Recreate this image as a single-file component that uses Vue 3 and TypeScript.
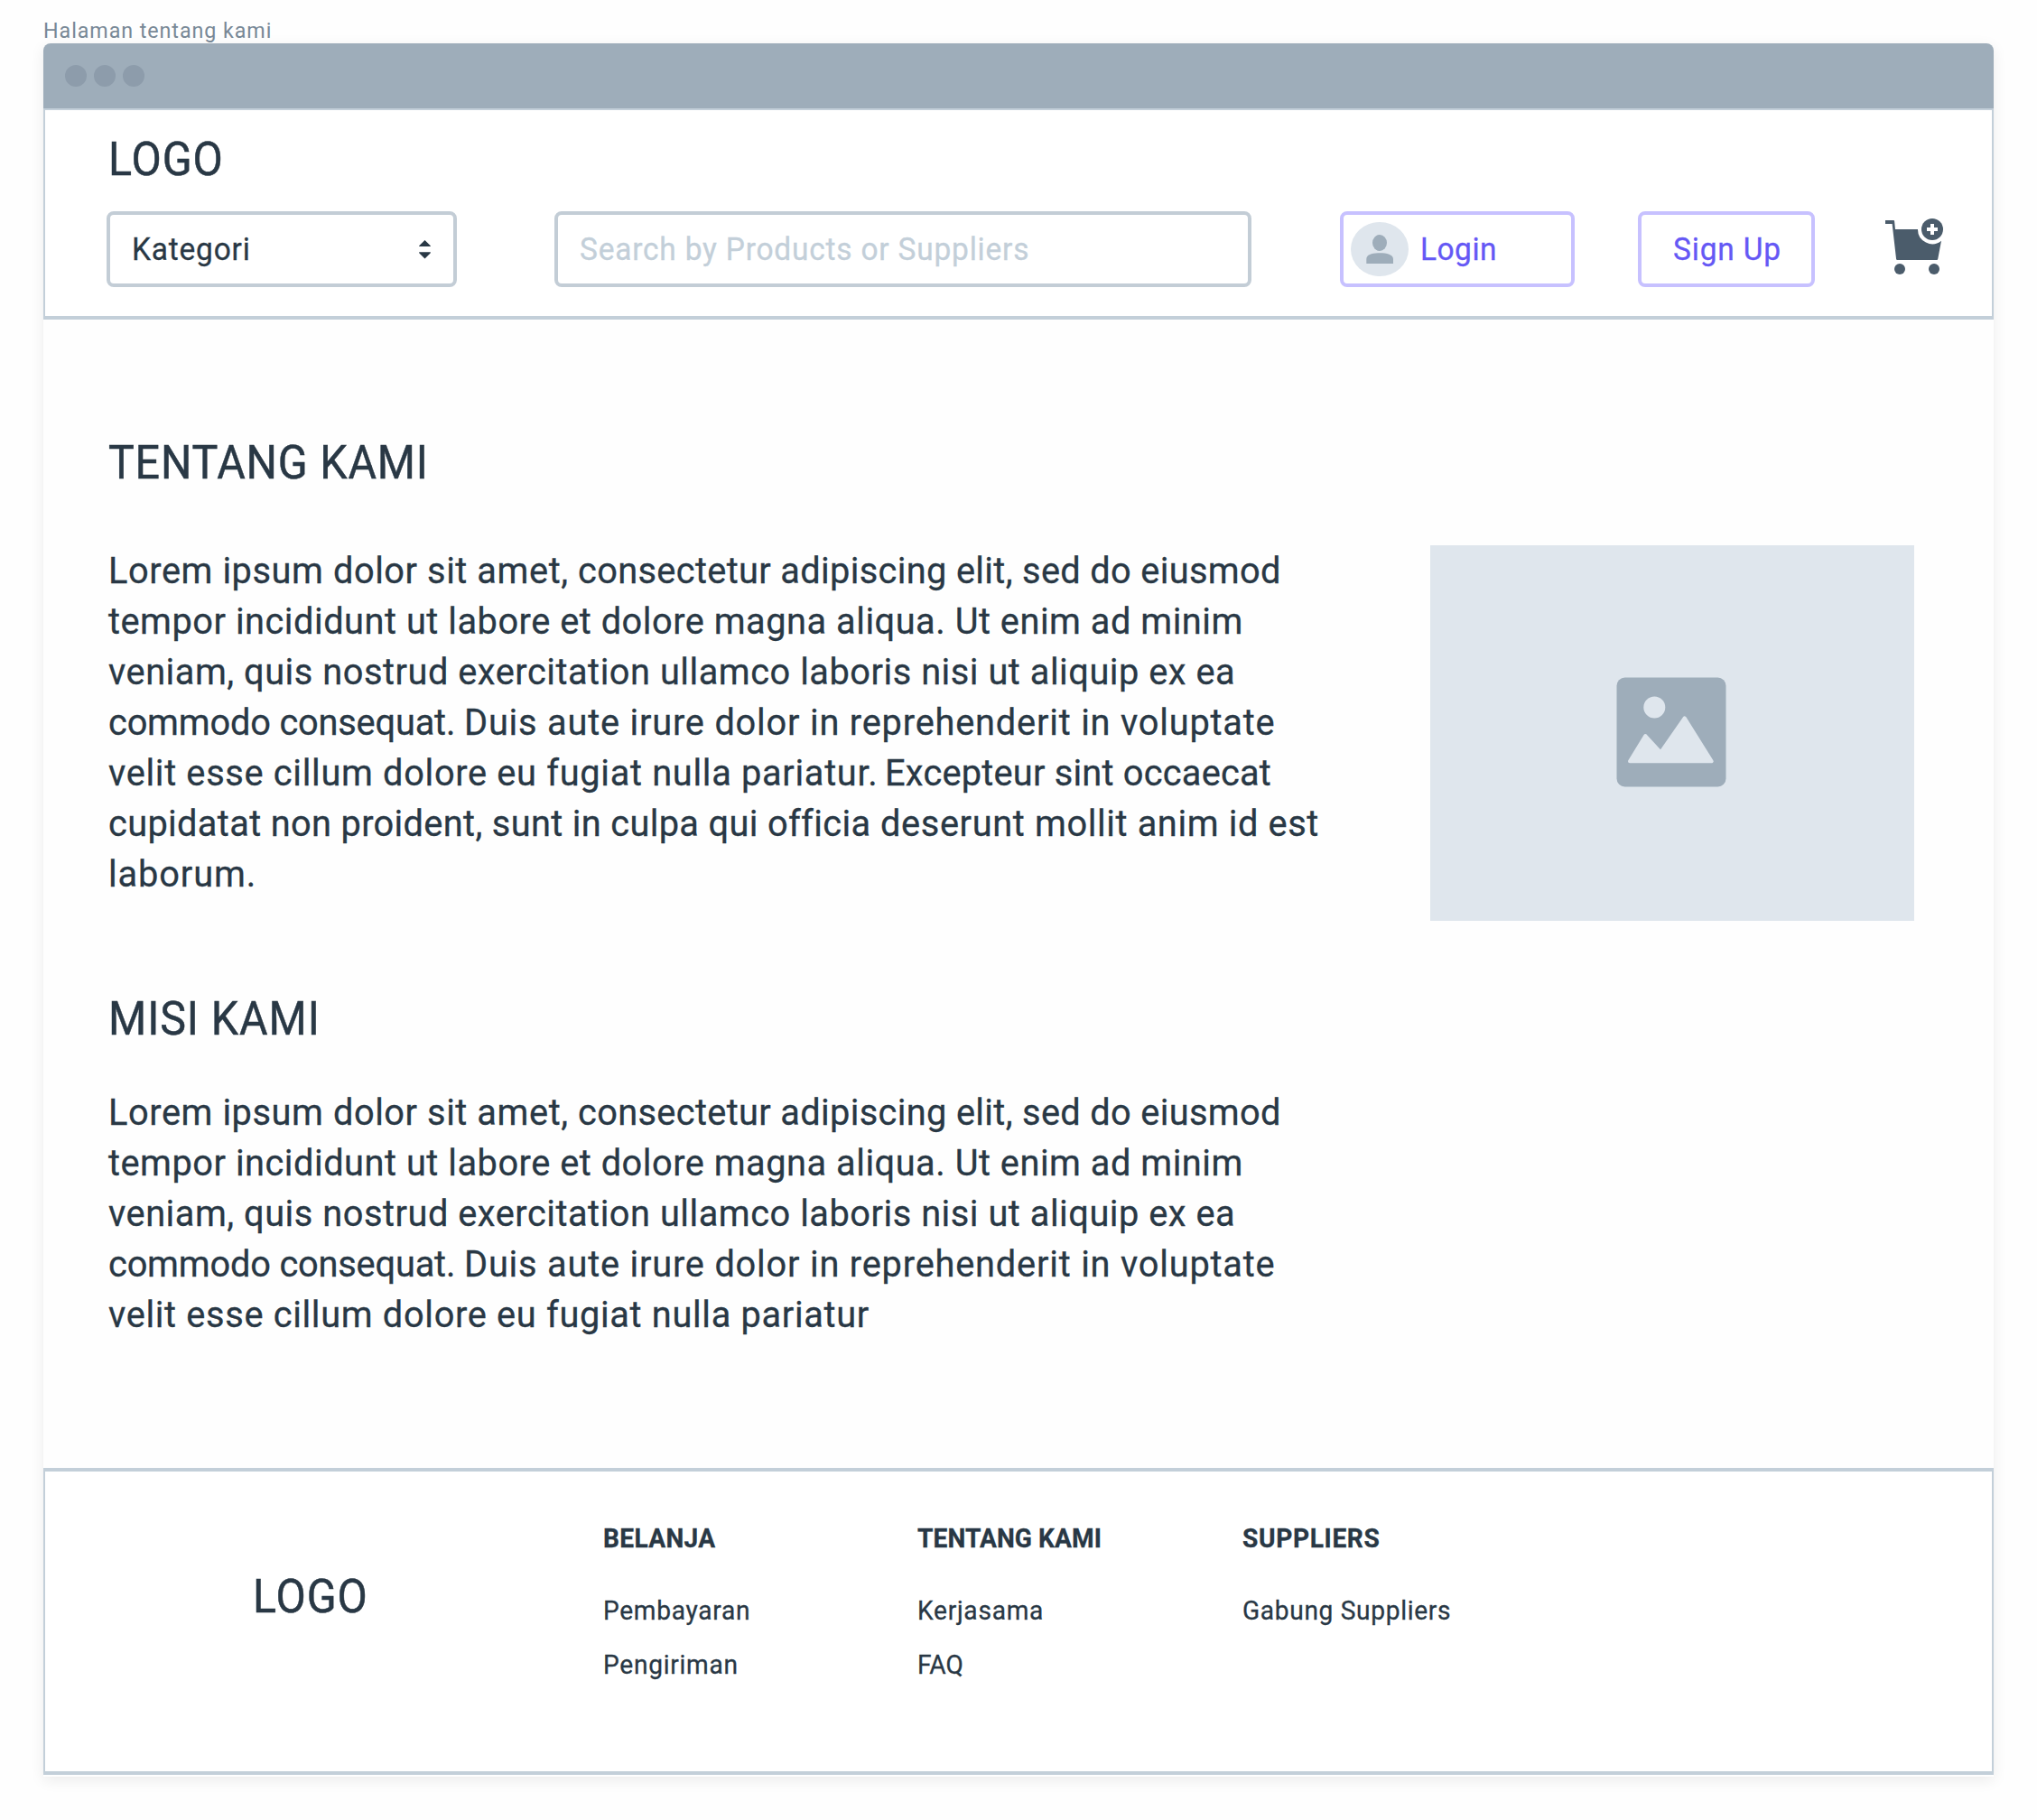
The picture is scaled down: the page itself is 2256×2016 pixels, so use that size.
<script setup lang="ts">
import type { Directive } from 'vue'

interface Run {
  text: string
  width: number
  // Distance to the origin of the next run on the same line.
  advance?: number
}

interface FooterColumn {
  title: Run
  links: Run[]
}

// Tunes tracking so that the ink of a run ends exactly `width` px from its origin.
const vFit: Directive<HTMLElement, number> = {
  mounted(el, { value }) {
    const ctx = document.createElement('canvas').getContext('2d')
    if (!ctx) return
    const style = getComputedStyle(el)
    const text = (el.textContent ?? '').trim()
    const squeeze = parseFloat(style.getPropertyValue('--squeeze')) || 1
    ctx.font = `${style.fontWeight} ${style.fontSize} ${style.fontFamily}`
    ctx.letterSpacing = '0.001px'
    const ink = ctx.measureText(text).actualBoundingBoxRight
    const spacing = (value / squeeze - ink) / (text.length - 1)
    el.style.letterSpacing = `${spacing.toFixed(3)}px`
  },
}

const opening: Run[][] = [
  [
    { text: 'Lorem ipsum dolor sit amet,', width: 508, advance: 520 },
    { text: 'consectetur adipiscing elit, sed do eiusmod', width: 776.5 },
  ],
  [{ text: 'tempor incididunt ut labore et dolore magna aliqua. Ut enim ad minim', width: 1254.5 }],
  [{ text: 'veniam, quis nostrud exercitation ullamco laboris nisi ut aliquip ex ea', width: 1246.5 }],
  [
    { text: 'commodo consequat.', width: 381.7, advance: 394 },
    { text: 'Duis aute irure dolor in reprehenderit in voluptate', width: 897 },
  ],
]

const about: Run[][] = [
  ...opening,
  [
    { text: 'velit esse cillum dolore eu fugiat nulla pariatur.', width: 849, advance: 860 },
    { text: 'Excepteur sint occaecat', width: 426.5 },
  ],
  [
    { text: 'cupidatat non proident, sunt in culpa qui officia', width: 842.8, advance: 854.5 },
    { text: 'deserunt mollit anim id est', width: 484 },
  ],
  [{ text: 'laborum.', width: 160.5 }],
]

const mission: Run[][] = [
  ...opening,
  [{ text: 'velit esse cillum dolore eu fugiat nulla pariatur', width: 842.5 }],
]

const columns: FooterColumn[] = [
  {
    title: { text: 'BELANJA', width: 124.7 },
    links: [
      { text: 'Pembayaran', width: 161.5 },
      { text: 'Pengiriman', width: 148 },
    ],
  },
  {
    title: { text: 'TENTANG KAMI', width: 202.5 },
    links: [
      { text: 'Kerjasama', width: 138.6 },
      { text: 'FAQ', width: 50 },
    ],
  },
  {
    title: { text: 'SUPPLIERS', width: 151 },
    links: [{ text: 'Gabung Suppliers', width: 229.5 }],
  },
]
</script>

<template>
  <div class="page">
    <div class="caption"><span v-fit="251.5" class="t">Halaman tentang kami</span></div>
    <div class="window">
      <div class="titlebar"><i></i><i></i><i></i></div>

      <header class="header">
        <div class="logo"><span v-fit="124.3" class="t caps">LOGO</span></div>
        <div class="controls">
          <div class="box select">
            <span v-fit="129.5" class="t">Kategori</span>
            <svg class="arrows" width="13" height="21" viewBox="0 0 13 21">
              <path d="M6.5 0 12.8 6.2V7H.2V6.2ZM6.5 20.5 12.8 14.2V13.2H.2V14.2Z" fill="#293845" />
            </svg>
          </div>
          <div class="box search"><span v-fit="496.7" class="t">Search by Products or Suppliers</span></div>
          <div class="box button login">
            <svg width="64" height="60" viewBox="0 0 64 60">
              <ellipse cx="32" cy="30" rx="32" ry="30" fill="#dfe6ed" />
              <ellipse cx="32" cy="23" rx="8" ry="9" fill="#9eadba" />
              <path d="M17.3 46V41C17.3 36 24 34.3 32 34.3S47 36 47 41V46Z" fill="#9eadba" />
            </svg>
            <span v-fit="82.5" class="t">Login</span>
          </div>
          <div class="box button signup"><span v-fit="117.8" class="t">Sign Up</span></div>
          <svg class="cart" width="64" height="62" viewBox="0 0 64 62">
            <g fill="#4b5c6b">
              <path d="M0 2H9.2Q10 2 10.1 2.9L11 12H36A16 16 0 0 0 62 24.7L58.2 45Q58 46 57 46H13.2Q12.2 46 12.1 45L7.6 6H0Z" />
              <circle cx="16" cy="56" r="6" />
              <circle cx="54" cy="56" r="6" />
              <circle cx="52" cy="12" r="12" />
            </g>
            <path d="M50 6h4v4h4v4h-4v4h-4v-4h-4v-4h4Z" fill="#fff" />
          </svg>
        </div>
      </header>

      <main class="main">
        <div class="copy">
          <h1><span v-fit="350" class="t caps">TENTANG KAMI</span></h1>
          <p class="first">
            <span v-for="(line, i) in about" :key="i" class="line">
              <span
                v-for="run in line"
                :key="run.text"
                class="run"
                :style="run.advance ? { width: `${run.advance}px` } : undefined"
              ><span v-fit="run.width" class="t">{{ run.text }}</span></span>
            </span>
          </p>
          <h2><span v-fit="230" class="t caps">MISI KAMI</span></h2>
          <p class="second">
            <span v-for="(line, i) in mission" :key="i" class="line">
              <span
                v-for="run in line"
                :key="run.text"
                class="run"
                :style="run.advance ? { width: `${run.advance}px` } : undefined"
              ><span v-fit="run.width" class="t">{{ run.text }}</span></span>
            </span>
          </p>
        </div>
        <div class="image">
          <svg width="122" height="122" viewBox="0 0 122 122">
            <rect x=".5" y=".5" width="121" height="121" rx="9" fill="#9eadba" />
            <circle cx="42.3" cy="33.5" r="12" fill="#dfe6ed" />
            <path
              d="M15 93.300 32.300 65 49.300 83.500 75.700 45.300 105.700 93.300Z"
              fill="#dfe6ed"
              stroke="#dfe6ed"
              stroke-width="4"
              stroke-linejoin="round"
            />
          </svg>
        </div>
      </main>

      <footer class="footer">
        <div class="logo"><span v-fit="124.3" class="t caps">LOGO</span></div>
        <div v-for="col in columns" :key="col.title.text" class="column">
          <strong><span v-fit="col.title.width" class="t">{{ col.title.text }}</span></strong>
          <div v-for="link in col.links" :key="link.text" class="link">
            <span v-fit="link.width" class="t">{{ link.text }}</span>
          </div>
        </div>
      </footer>
    </div>
  </div>
</template>

<style>
body {
  background: #fefefe;
}
</style>

<style scoped>
.page {
  box-sizing: border-box;
  width: 2256px;
  height: 2016px;
  padding: 18px 48px 0;
  color: #293845;
  font-family: Roboto, 'Liberation Sans', sans-serif;
}
.t {
  --squeeze: 0.97;
  display: inline-block;
  white-space: nowrap;
  transform: scaleX(0.97);
  transform-origin: 0 0;
  -webkit-text-stroke: 0.3px currentColor;
}
.t.caps {
  --squeeze: 0.93;
  transform: scaleX(0.93);
  -webkit-text-stroke-width: 0.5px;
}
.caption {
  height: 30px;
  font-size: 24px;
  line-height: 32px;
  color: #788896;
}
.caption .t {
  -webkit-text-stroke-width: 0;
}
.window {
  display: flex;
  flex-direction: column;
  height: 1920px;
  border-radius: 8px 8px 0 0;
  background: #fefefe;
  box-shadow: 0 4px 16px rgba(0, 0, 0, 0.08);
}
.titlebar {
  display: flex;
  gap: 8px;
  box-sizing: border-box;
  height: 72px;
  padding: 24px;
  border-radius: 8px 8px 0 0;
  background: #9eadba;
}
.titlebar i {
  width: 24px;
  height: 24px;
  border-radius: 50%;
  background: #8d9cab;
}
.header {
  box-sizing: border-box;
  height: 234px;
  padding: 24px 54px 0 68px;
  border: 2px solid #c3cfd9;
  border-bottom-width: 4px;
  background: #fff;
}
.logo {
  height: 60px;
  font-size: 52px;
  line-height: 62px;
}
.header .logo {
  margin-left: 2px;
}
.controls {
  display: flex;
  margin-top: 28px;
  font-size: 34.5px;
}
.box {
  display: flex;
  align-items: center;
  box-sizing: border-box;
  height: 84px;
  border: 4px solid #c3cdd6;
  border-radius: 8px;
  line-height: 76px;
}
.select {
  justify-content: space-between;
  width: 388px;
  padding: 0 25px 0 24px;
}
.search {
  width: 772px;
  margin-left: 108px;
  padding-left: 24px;
  color: #c3cfd9;
}
.button {
  border-color: #c7c1ff;
  color: #6558f5;
}
.login {
  width: 260px;
  margin-left: 98px;
  padding-left: 8px;
  gap: 12.5px;
}
.signup {
  width: 196px;
  margin-left: 70px;
  padding-left: 34.500px;
}
.cart {
  margin: 8px 0 0 78px;
}
.main {
  display: flex;
  justify-content: space-between;
  box-sizing: border-box;
  height: 1272px;
  padding: 128px 88px 0 72px;
}
h1,
h2,
p {
  margin: 0;
  font-weight: 400;
}
h1,
h2 {
  height: 60px;
  font-size: 52px;
  line-height: 62px;
}
h2 {
  margin-top: 102px;
}
p {
  font-size: 41px;
  line-height: 56px;
}
.line {
  display: flex;
  height: 56px;
}
.run {
  flex: none;
}
.copy {
  width: 1400px;
}
.first {
  margin-top: 62px;
}
.second {
  margin-top: 46px;
}
.image {
  display: flex;
  align-items: center;
  justify-content: center;
  width: 536px;
  height: 416px;
  margin-top: 122px;
  background: #dfe6ed;
}
.image svg {
  margin: 0 2px 2px 0;
}
.footer {
  display: grid;
  grid-template-columns: 388px 348px 360px 400px;
  box-sizing: border-box;
  height: 340px;
  padding: 54px 0 0 230px;
  border: 2px solid #c3cfd9;
  border-top-width: 4px;
  border-bottom-width: 4px;
  background: #fff;
}
.footer .logo {
  margin-top: 54px;
}
.column {
  font-size: 29px;
  line-height: 40px;
}
.column strong {
  display: block;
  height: 40px;
  margin-bottom: 40px;
  font-weight: 700;
}
.link {
  height: 40px;
  margin-bottom: 20px;
}
</style>
